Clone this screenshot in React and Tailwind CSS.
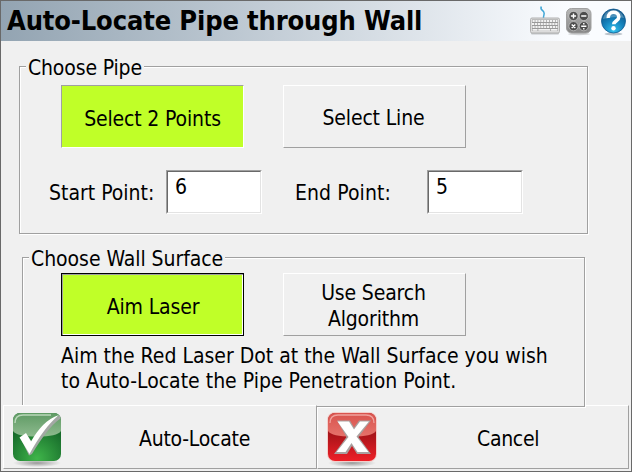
const bevelUp = 'border border-t-white border-l-white border-r-[#a0a0a0] border-b-[#a0a0a0]';
const bevelDown = 'border border-t-[#a0a0a0] border-l-[#a0a0a0] border-r-white border-b-white';
const etched = 'border border-[#a0a0a0] shadow-[1px_1px_0_#fff,inset_1px_1px_0_#fff]';

function KeyboardIcon() {
  return (
    <svg width="34" height="34" viewBox="0 0 34 34" fill="none">
      <path d="M13.300 2.500c-1.500 3.500 1.500 3.500 2.500 5.500 1.200 2.500-.5 3-.3 6" stroke="#3fa6d6" strokeWidth="1.500" />
      <rect x="3" y="28.500" width="28" height="2" rx="1" fill="#c3c6c9" />
      <rect x="2.500" y="14" width="29" height="15" rx="1.500" fill="#dcdcdc" stroke="#b0b0b0" />
      <path d="M4 15.500h26v11.500H4z" fill="#9a9a9a" />
      <path d="M4.500 17h25M4 20h26M4.500 22.900h25" stroke="#f2f2f2" strokeWidth="2" strokeDasharray="2.200 .7" />
      <path d="M4.500 25.800h5M10.300 25.800h12M23 25.800h6.500" stroke="#f2f2f2" strokeWidth="1.800" />
    </svg>
  );
}

function CalculatorIcon() {
  return (
    <svg width="28" height="30" viewBox="0 0 28 30" fill="none">
      <defs>
        <linearGradient id="calc" x1="0" y1="0" x2="0" y2="1">
          <stop offset="0" stopColor="#b8b8b8" />
          <stop offset="1" stopColor="#858585" />
        </linearGradient>
      </defs>
      <ellipse cx="14" cy="28" rx="11" ry="1.200" fill="#d0d2d4" />
      <rect x="1.500" y="2.500" width="24.500" height="24.500" rx="5" fill="url(#calc)" stroke="#a0a0a0" />
      <g fill="#4d4d4d" stroke="#cfcfcf" strokeWidth=".7">
        <circle cx="8.500" cy="10" r="4.600" />
        <circle cx="18.800" cy="10" r="4.600" />
        <circle cx="8.500" cy="20.200" r="4.600" />
        <circle cx="18.800" cy="20.200" r="4.600" />
      </g>
      <path d="M5.900 10h5.200M8.500 7.400v5.200M16.200 10h5.200M6.700 18.400l3.600 3.600M10.300 18.400l-3.600 3.600M16.200 20.200h5.200M18.800 17v1.500M18.800 21.900v1.500" stroke="#fff" strokeWidth="1.400" />
    </svg>
  );
}

function HelpIcon() {
  return (
    <svg width="28" height="30" viewBox="0 0 28 30" fill="none">
      <defs>
        <radialGradient id="help" cx=".5" cy=".9" r=".85">
          <stop offset="0" stopColor="#35c3ee" />
          <stop offset=".5" stopColor="#1583bd" />
          <stop offset="1" stopColor="#0c5286" />
        </radialGradient>
      </defs>
      <ellipse cx="13.500" cy="28" rx="9" ry="1.400" fill="#b9c2ca" />
      <circle cx="13.500" cy="15" r="12" fill="url(#help)" stroke="#0f5a90" strokeWidth=".8" />
      <path d="M3 13C4.500 6 8.500 4 13.500 4s9 3 10.500 8c-7-2-14-1-21 1z" fill="#fff" opacity=".25" />
      <path d="M8.300 12C7.500 4.500 19 4.500 18.800 11c0 4-5 4-5 7.200" stroke="#fff" strokeWidth="3.600" />
      <circle cx="13.500" cy="22.200" r="2.200" fill="#fff" />
    </svg>
  );
}

function CheckIcon() {
  return (
    <svg width="56" height="60" viewBox="0 0 56 60" fill="none">
      <defs>
        <radialGradient id="green" cx=".5" cy=".95" r=".7">
          <stop offset="0" stopColor="#3fb54a" />
          <stop offset="1" stopColor="#176b2b" />
        </radialGradient>
        <linearGradient id="greenGloss" x1="0" y1="0" x2="0" y2="1">
          <stop offset="0" stopColor="#5f9a64" />
          <stop offset="1" stopColor="#8dba8e" />
        </linearGradient>
        <radialGradient id="greenShadow">
          <stop offset="0" stopColor="#999" />
          <stop offset="1" stopColor="#f0f0f0" />
        </radialGradient>
      </defs>
      <ellipse cx="28" cy="54" rx="24" ry="4" fill="url(#greenShadow)" />
      <rect x="4" y="4" width="48" height="48" rx="7" fill="url(#green)" />
      <path d="M4 22V11a7 7 0 0 1 7-7h34a7 7 0 0 1 7 7v11c-3 4-10 5.500-24 5.500S7 26 4 22z" fill="url(#greenGloss)" />
      <path d="M6 14c0-6 3-8 8-8h28" stroke="#b9d8b9" strokeWidth="1.500" />
      <path d="M12 30l6-4 5 7C31 21 40 10 51 6.500l.5 3C41 17 32 30 23 45l-3 1.500z" fill="#a3a8a4" />
      <path d="M10.500 28.500l6.500-4.500 5 8.500C29 20 38 10 50 6 39 15 30 28 20.500 45z" fill="#fff" />
    </svg>
  );
}

function CrossIcon() {
  return (
    <svg width="56" height="60" viewBox="0 0 56 60" fill="none">
      <defs>
        <linearGradient id="red" x1="0" y1="0" x2="0" y2="1">
          <stop offset=".4" stopColor="#a31318" />
          <stop offset="1" stopColor="#ee2028" />
        </linearGradient>
        <linearGradient id="redGloss" x1="0" y1="0" x2="0" y2="1">
          <stop offset="0" stopColor="#d9534d" />
          <stop offset="1" stopColor="#e5726b" />
        </linearGradient>
        <radialGradient id="redShadow">
          <stop offset="0" stopColor="#999" />
          <stop offset="1" stopColor="#f0f0f0" />
        </radialGradient>
      </defs>
      <ellipse cx="28" cy="54" rx="24" ry="4" fill="url(#redShadow)" />
      <rect x="3" y="3" width="50" height="50" rx="8" fill="#f3cfcb" />
      <rect x="4" y="4" width="48" height="48" rx="7" fill="url(#red)" />
      <path d="M4 22V11a7 7 0 0 1 7-7h34a7 7 0 0 1 7 7v11c-3 4-10 5.500-24 5.500S7 26 4 22z" fill="url(#redGloss)" />
      <path d="M6 14c0-6 3-8 8-8h28c5 0 8 2 8 8" stroke="#f0a29d" strokeWidth="1.300" />
      <path d="M13 11.500h13l4 7 5-7h12L34.500 28 47 45H33l-5-8-5 8H10l12.500-17z" fill="#a9a09f" />
      <path d="M13.500 12.500h11.500l5 8 6-8h9L32.500 27.500 44.500 43H33.500l-6-9-6 9h-9L24.500 28z" fill="#fff" />
    </svg>
  );
}

function PushButton({ children, active, focused }) {
  let look = bevelUp + ' pr-0.5 pt-0.5';
  if (active) look = bevelDown + ' bg-[#c0ff28] pt-1';
  if (focused) look = 'bg-[#c0ff28] border border-black pt-1 pl-px shadow-[inset_1px_1px_0_#a0a0a0,inset_-1px_-1px_0_#fff]';
  return (
    <button className={`flex h-[63px] w-[183px] items-center justify-center text-center leading-[26px] tracking-[-0.15px] ${look}`}>
      {children}
    </button>
  );
}

function PointField({ value }) {
  return (
    <div className="h-11 w-24 border border-t-[#a0a0a0] border-l-[#a0a0a0] border-r-white border-b-white">
      <div className="h-full border border-t-[#696969] border-l-[#696969] border-r-[#e3e3e3] border-b-[#e3e3e3] bg-white pl-[7px] pt-[3px]">
        {value}
      </div>
    </div>
  );
}

function App() {
  return (
    <div className="flex h-[472px] w-[632px] flex-col overflow-hidden border border-[#696969] bg-[#f0f0f0] text-[21px] leading-[25px] whitespace-nowrap text-black [font-family:'DejaVu_Sans_Condensed','DejaVu_Sans',sans-serif]">
      <header className="flex h-10 shrink-0 items-center justify-between bg-linear-to-r from-[#93a4b2] to-[#fafcff] to-90% pl-1.5">
        <h1 className="text-[27px] leading-10 font-bold tracking-[-0.14px]">Auto-Locate Pipe through Wall</h1>
        <div className="flex items-center gap-[3px] pr-[3px]">
          <KeyboardIcon />
          <CalculatorIcon />
          <div className="pl-1">
            <HelpIcon />
          </div>
        </div>
      </header>

      <section className={`mt-[25px] ml-[18px] h-[168px] w-[569px] shrink-0 ${etched}`}>
        <h2 className="-mt-3 ml-1.5 h-[25px] w-[118px] bg-[#f0f0f0] pt-px pl-0.5 tracking-[-0.15px]">Choose Pipe</h2>
        <div className="mt-[5px] ml-[41px] flex gap-[39px]">
          <PushButton active>Select 2 Points</PushButton>
          <PushButton>Select Line</PushButton>
        </div>
        <div className="mt-[22px] ml-[29px] flex items-center">
          <label className="w-[117px] pt-0.5">Start Point:</label>
          <PointField value="6" />
          <label className="ml-[33px] w-[132px] pt-0.5 tracking-[0.08px]">End Point:</label>
          <PointField value="5" />
        </div>
      </section>

      <section className={`relative z-10 mt-[23px] ml-[21px] h-[150px] w-[563px] shrink-0 bg-[#f0f0f0] ${etched}`}>
        <h2 className="-mt-3 ml-1.5 h-[25px] w-[196px] bg-[#f0f0f0] pt-px pl-0.5 tracking-[-0.05px]">Choose Wall Surface</h2>
        <div className="mt-[2px] ml-[38px] flex gap-[39px]">
          <PushButton active focused>Aim Laser</PushButton>
          <PushButton>Use Search<br />Algorithm</PushButton>
        </div>
        <p className="mt-2 ml-[38px]">
          Aim the Red Laser Dot at the Wall Surface you wish<br />
          to Auto-Locate the Pipe Penetration Point.
        </p>
      </section>

      <footer className="-mt-0.5 ml-0.5 flex h-16 shrink-0">
        <button className={`relative z-20 flex w-[314px] items-center bg-[#f0f0f0] pt-1 pl-[5px] ${bevelUp}`}>
          <CheckIcon />
          <span className="ml-[74px] tracking-[-0.25px]">Auto-Locate</span>
        </button>
        <button className={`flex w-[312px] items-center pt-1 pl-1.5 ${bevelUp}`}>
          <CrossIcon />
          <span className="ml-[97px] tracking-[-0.3px]">Cancel</span>
        </button>
      </footer>
    </div>
  );
}

export default App;
